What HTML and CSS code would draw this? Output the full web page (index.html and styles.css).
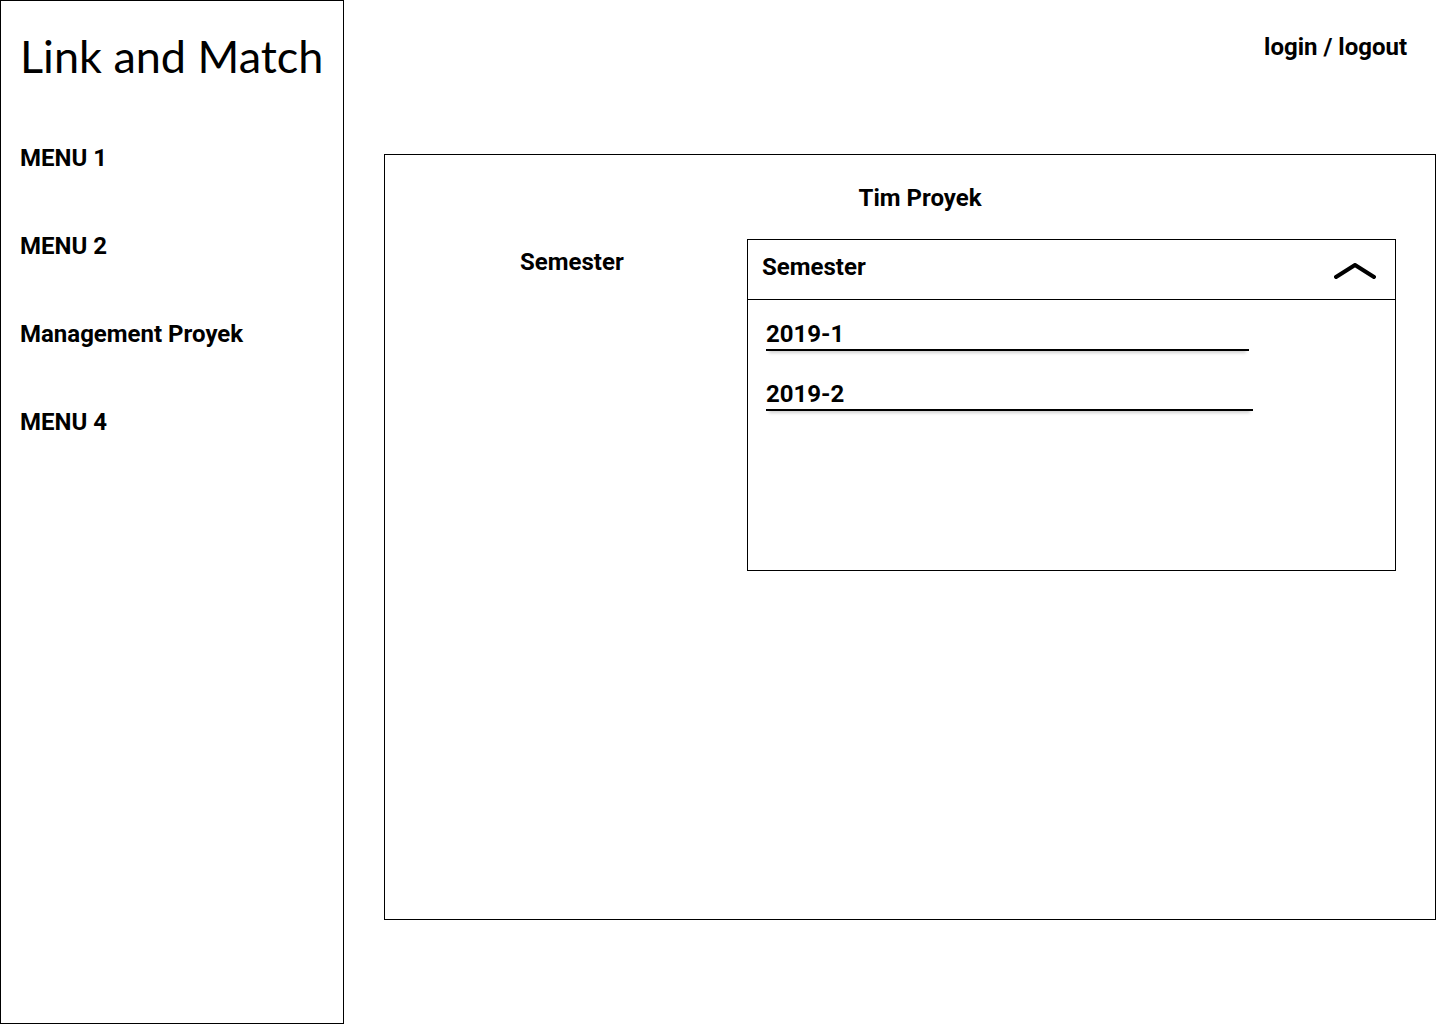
FILE: index.html
```html
<!DOCTYPE html>
<html lang="id">
<head>
<meta charset="utf-8">
<title>Link and Match</title>
<link rel="stylesheet" href="styles.css">
</head>
<body>
<div class="page">
  <aside class="sidebar">
    <h1 class="brand">Link and Match</h1>
    <nav class="menu">
      <a class="menu-item">MENU 1</a>
      <a class="menu-item">MENU 2</a>
      <a class="menu-item">Management Proyek</a>
      <a class="menu-item">MENU 4</a>
    </nav>
  </aside>
  <main class="main">
    <header class="topbar">
      <a class="auth">login / logout</a>
    </header>
    <section class="card">
      <h2 class="card-title">Tim Proyek</h2>
      <div class="form-row">
        <label class="field-label">Semester</label>
        <div class="dropdown">
          <div class="dropdown-head">
            <span class="dropdown-value">Semester</span>
            <svg class="chevron" width="42" height="16" viewBox="0 0 42 16"><polyline points="2,14 21,2 40,14" fill="none" stroke="#000" stroke-width="4" stroke-linecap="round" stroke-linejoin="round"/></svg>
          </div>
          <ul class="options">
            <li class="option option-1">2019-1</li>
            <li class="option option-2">2019-2</li>
          </ul>
        </div>
      </div>
    </section>
  </main>
</div>
</body>
</html>
```

FILE: styles.css
```css
* { box-sizing: border-box; }
html, body { margin: 0; padding: 0; background: #fff; }
body { font-family: Roboto, "Liberation Sans", sans-serif; color: #000; }
.page { display: flex; width: 1440px; height: 1024px; }
.sidebar {
  width: 344px;
  height: 1024px;
  border: 1px solid #000;
  padding: 27px 0 0 19px;
  flex: none;
}
.brand {
  margin: 0;
  font-family: Lato, "Open Sans", sans-serif;
  font-weight: 400;
  font-size: 45px;
  line-height: 56px;
}
.menu { display: flex; flex-direction: column; margin-top: 60px; }
.menu-item {
  font-weight: 700;
  font-size: 24px;
  line-height: 28px;
  height: 88px;
}
.main { flex: 1; display: flex; flex-direction: column; }
.topbar { display: flex; justify-content: flex-end; padding: 33px 33px 0 0; height: 154px; }
.auth { font-weight: 700; font-size: 24px; line-height: 28px; height: 28px; }
.card {
  margin-left: 40px;
  width: 1052px;
  height: 766px;
  border: 1px solid #000;
  padding: 29px 0 0 0;
}
.card-title {
  margin: 0;
  text-align: center;
  font-weight: 700;
  font-size: 24px;
  line-height: 28px;
  padding-left: 20px;
}
.form-row { display: flex; margin-top: 27px; }
.field-label {
  width: 362px;
  padding-left: 135px;
  font-weight: 700;
  font-size: 24px;
  line-height: 28px;
  padding-top: 9px;
  flex: none;
}
.dropdown {
  width: 649px;
  height: 332px;
  border: 1px solid #000;
}
.dropdown-head {
  height: 60px;
  border-bottom: 1px solid #000;
  display: flex;
  align-items: center;
  justify-content: space-between;
  padding: 0 19px 0 14px;
}
.dropdown-value { font-weight: 700; font-size: 24px; line-height: 28px; margin-top: -6px; }
.chevron { display: block; margin-top: 2px; }
.options { list-style: none; margin: 0; padding: 19px 0 0 18px; }
.option {
  font-weight: 700;
  font-size: 24px;
  line-height: 30px;
  border-bottom: 2px solid #000;
  box-shadow: 0 5px 3px -3px rgba(0,0,0,0.18);
  margin-bottom: 28px;
}
.option-1 { width: 483px; }
.option-2 { width: 487px; }
```
